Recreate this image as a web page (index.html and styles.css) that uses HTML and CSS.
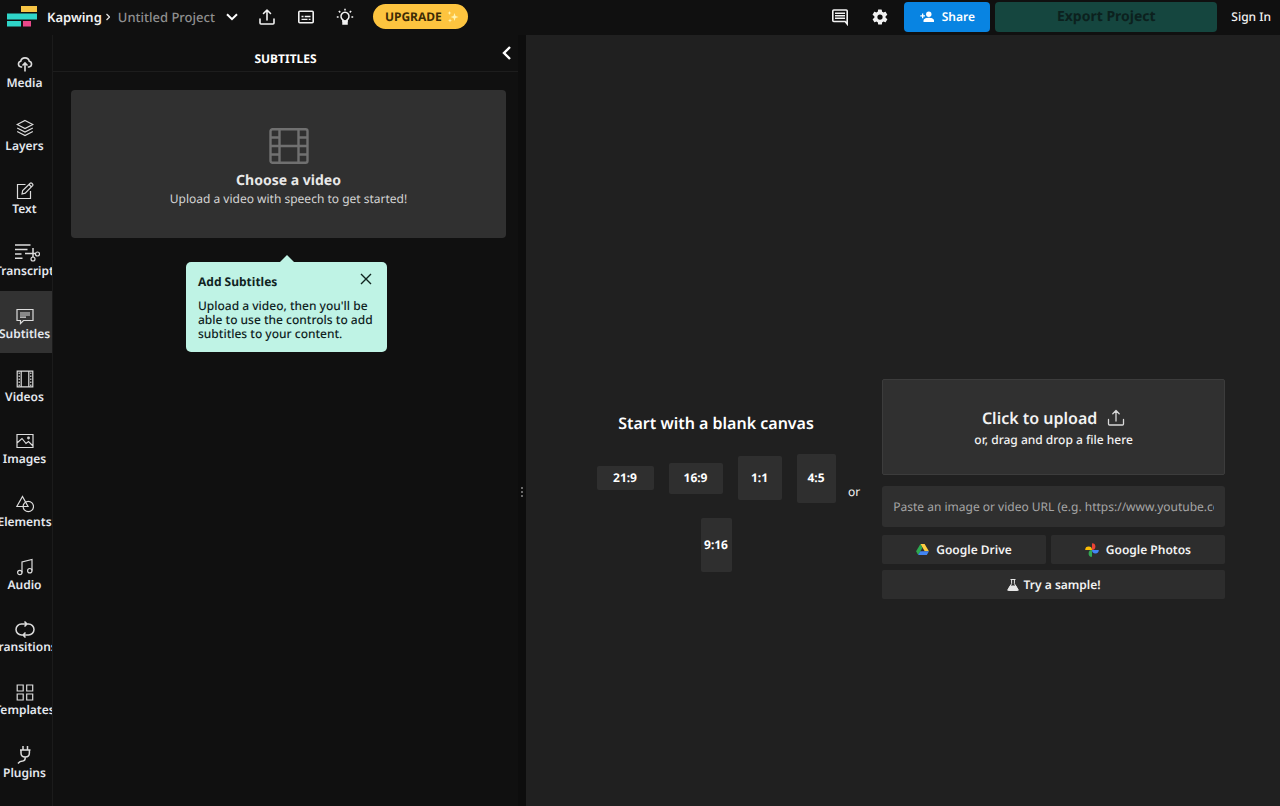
FILE: index.html
```html
<!DOCTYPE html>
<html lang="en">
<head>
<meta charset="utf-8">
<title>Kapwing</title>
<link rel="stylesheet" href="styles.css">
</head>
<body>
<div class="app">
  <header class="topbar">
    <a class="logo" href="#" aria-label="Home">
      <svg width="30" height="21" viewBox="0 0 30 21"><path fill="#f6c445" d="M14 0h16v6H14z"/><path fill="#2fd5c8" d="M0 7.500h30v6H0zM0 15h14v5.500H0z"/><path fill="#e8488a" d="M16 15h8v5.500h-8z"/></svg>
    </a>
    <a class="brand" href="#">Kapwing</a>
    <svg class="crumb" width="4" height="8" viewBox="0 0 4 8" fill="none" stroke="#ddd" stroke-width="1.300"><path d="M.5 1l3 3-3 3"/></svg>
    <button class="project">Untitled Project
      <svg width="12" height="8" viewBox="0 0 12 8" fill="none" stroke="#fff" stroke-width="2"><path d="M1 1.200l5 5 5-5"/></svg>
    </button>
    <div class="tools">
      <button class="icon" aria-label="Upload"><svg width="18" height="18" viewBox="0 0 18 18" fill="none" stroke="#f2f2f2" stroke-width="1.600" stroke-linecap="round" stroke-linejoin="round"><path d="M2 11v4q0 1 1 1h12q1 0 1-1v-4M9 12V2M5.500 5.500L9 2l3.500 3.500"/></svg></button>
      <button class="icon" aria-label="Subtitles"><svg width="18" height="18" viewBox="0 0 18 18" fill="none" stroke="#f2f2f2" stroke-width="1.600"><rect x="1.800" y="3.300" width="14.400" height="11.400" rx="1"/><path d="M4.500 8.500h2m1.200 0h5.800M4.500 11.300h6m1.200 0h1.800" stroke-width="1.300"/></svg></button>
      <button class="icon" aria-label="Tips"><svg width="18" height="18" viewBox="0 0 18 18" fill="none" stroke="#f2f2f2" stroke-width="1.500"><path d="M7 13v-1.200a4 4 0 1 1 4 0V13z"/><path d="M7 13h4v3H7z" fill="#f2f2f2"/><path d="M9 .8v1.800M.8 9h1.800M15.400 9h1.800M2.800 3l1.500 1.400M15.200 3l-1.500 1.400"/></svg></button>
    </div>
    <button class="upgrade">UPGRADE
      <svg width="12" height="12" viewBox="0 0 12 12" fill="#fff3b0"><path d="M7.500 2l1 3 3 1-3 1-1 3-1-3-3-1 3-1zM2.500 0l.6 1.400 1.400.6-1.400.6-.6 1.400-.6-1.400L.5 2l1.400-.6zM3 7.500l.6 1.400 1.400.6-1.400.6L3 11.500l-.6-1.400L1 9.500l1.400-.6z"/></svg>
    </button>
    <div class="actions">
      <button class="icon" aria-label="Comments"><svg width="18" height="18" viewBox="0 0 18 18" fill="none" stroke="#f2f2f2" stroke-width="1.600"><path d="M16.200 16V3q0-1-1-1H2.800q-1 0-1 1v9.500q0 1 1 1h11.400z"/><path d="M4 5.200h10M4 7.700h10M4 10.200h10" stroke-width="1.400"/></svg></button>
      <button class="icon" aria-label="Settings"><svg width="18" height="18" viewBox="0 0 24 24" fill="#f2f2f2"><path d="M19.400 13c0-.3.100-.6.100-1s0-.7-.1-1l2.100-1.600c.2-.2.300-.4.100-.6l-2-3.500c-.1-.2-.4-.3-.6-.2l-2.500 1a7.300 7.300 0 0 0-1.700-1l-.4-2.600a.5.500 0 0 0-.5-.5h-4c-.2 0-.5.200-.5.500L9 5.100a7.300 7.300 0 0 0-1.700 1l-2.500-1c-.2-.1-.5 0-.6.200l-2 3.500c-.1.200-.1.500.1.600L4.500 11a8 8 0 0 0 0 2l-2.100 1.600c-.2.200-.3.400-.1.600l2 3.500c.1.200.4.300.6.200l2.500-1c.5.400 1.100.7 1.700 1l.4 2.600c0 .3.200.5.500.5h4c.3 0 .5-.2.500-.5l.4-2.600a7.300 7.300 0 0 0 1.700-1l2.500 1c.2.100.5 0 .6-.2l2-3.500c.1-.2.100-.5-.1-.6zM12 15.500a3.500 3.500 0 1 1 0-7 3.500 3.500 0 0 1 0 7z"/></svg></button>
    </div>
    <button class="share">
      <svg width="14" height="12" viewBox="0 0 14 12" fill="#fff"><circle cx="8.800" cy="3.300" r="2.700"/><path d="M3.500 11V9.500C3.500 7.500 7 6.800 8.800 6.800S14 7.500 14 9.500V11zM2 2.500h1.300v1.700H5v1.300H3.300v1.700H2V5.500H.3V4.200H2z"/></svg>
      Share
    </button>
    <button class="export" disabled>Export Project</button>
    <a class="signin" href="#">Sign In</a>
  </header>

  <div class="body">
    <nav class="rail">
      <button class="tab"><svg class="tabicon" viewBox="0 0 18 18"><path stroke-width="1.600" d="M6.200 11H5a2.900 2.900 0 0 1-.3-5.700 4.400 4.400 0 0 1 8.600 0A2.900 2.900 0 0 1 13 11h-1.200M9 15.500V7M6.500 9.500L9 7l2.500 2.500"/></svg><span>Media</span></button>
      <button class="tab"><svg class="tabicon" viewBox="0 0 18 18"><path d="M9 1.500l7.800 4L9 9.500l-7.800-4zM1.200 9L9 13l7.800-4M1.200 12.500l7.800 4 7.800-4"/></svg><span>Layers</span></button>
      <button class="tab"><svg class="tabicon" viewBox="0 0 18 18"><path d="M9.500 2.500H1.500v14h13V9M6 12l.7-3.500 7.500-7.300q.8-.6 1.600.1l.8.8q.6.800 0 1.500L9.200 11.200zM13 2.500l2.500 2.500"/></svg><span>Text</span></button>
      <button class="tab"><svg class="tabicon script" viewBox="0 0 26 18"><path stroke-width="1.500" d="M1 1h15.500M1 5.500h12.500M1 10h6.500M1 14.200h7.500M19 4v9.500M11 9.500h10.500"/><circle cx="19" cy="15" r="2"/><circle cx="23.500" cy="10" r="2"/></svg><span>Transcript</span></button>
      <button class="tab active"><svg class="tabicon" viewBox="0 0 18 18"><path d="M1 2.500h16v11H7.500L4.500 16.500v-3H1zM4 6h10M4 8h10M4 10.200h6"/></svg><span>Subtitles</span></button>
      <button class="tab"><svg class="tabicon" viewBox="0 0 18 18"><path d="M1.200 1.200h15.600v15.600H1.200zM5.200 1.200v15.600M12.800 1.200v15.600"/><path d="M3.200 2.500v13.500M14.800 2.500v13.500" stroke-dasharray="1.500 1.500"/></svg><span>Videos</span></button>
      <button class="tab"><svg class="tabicon" viewBox="0 0 18 18"><path d="M1 2.500h16v13H1zM1 11l5-4.500 4 5 2.500-2L17 14"/><circle cx="12.500" cy="6" r=".8"/></svg><span>Images</span></button>
      <button class="tab"><svg class="tabicon" viewBox="0 0 18 18"><path d="M6.500 1.500l5.500 10H.8z"/><circle cx="12.300" cy="11.500" r="5.200"/></svg><span>Elements</span></button>
      <button class="tab"><svg class="tabicon" viewBox="0 0 18 18"><path d="M6 14.500V4l10-2.500V12.500"/><circle cx="3.800" cy="14.500" r="2.200"/><circle cx="13.800" cy="12.700" r="2.200"/></svg><span>Audio</span></button>
      <button class="tab"><svg class="tabicon wide" viewBox="0 0 26 18"><path stroke-width="1.500" d="M10.500 15H9.500a5.500 5.500 0 0 1 0-11H14.500M12.500 1.500L15 4l-2.500 2.500M15.500 4h1a5.500 5.500 0 0 1 0 11H11.500M13.500 12.500L11 15l2.500 2.500"/></svg><span>Transitions</span></button>
      <button class="tab"><svg class="tabicon" viewBox="0 0 18 18"><path d="M1.200 2h6v6h-6zM10.700 2h6v6h-6zM1.200 11h6v6h-6zM10.700 11h6v6h-6z"/></svg><span>Templates</span></button>
      <button class="tab"><svg class="tabicon" viewBox="0 0 18 18"><path stroke-width="1.500" d="M4 4h10.500M5 4v3q0 4 4.200 4t4.200-4V4M7 4V0M11.500 4V0M9.200 11q.3 3.700-2.500 4-3 0-4.700 2.500"/></svg><span>Plugins</span></button>
    </nav>

    <aside class="panel">
      <div class="panelhead">
        <h2>SUBTITLES</h2>
        <button class="collapse" aria-label="Collapse"><svg width="9" height="14" viewBox="0 0 9 14" fill="none" stroke="#fff" stroke-width="2.400"><path d="M8 1L2 7l6 6"/></svg></button>
      </div>
      <div class="panelbody">
        <button class="choose">
          <svg width="40" height="36" viewBox="0 0 40 36" fill="none" stroke="#707070" stroke-width="2.400"><rect x="1.500" y="1.200" width="37" height="33.600" rx="2"/><path d="M10.500 1v34M29.500 1v34M10.500 18h19M1 9.500h9.500M1 18h9.500M1 26.500h9.500M29.500 9.500H39M29.500 18H39M29.500 26.500H39"/></svg>
          <strong>Choose a video</strong>
          <span>Upload a video with speech to get started!</span>
        </button>
        <section class="tip">
          <div class="tiphead"><h3>Add Subtitles</h3>
            <button class="close" aria-label="Close"><svg width="12" height="12" viewBox="0 0 12 12" stroke="#10241f" stroke-width="1.400"><path d="M1 1l10 10M11 1L1 11"/></svg></button>
          </div>
          <p>Upload a video, then you'll be able to use the controls to add subtitles to your content.</p>
        </section>
      </div>
    </aside>
    <div class="grip"><svg width="2" height="10" viewBox="0 0 2 10" fill="#6a6a6a"><path d="M0 0h2v2H0zM0 4h2v2H0zM0 8h2v2H0z"/></svg></div>

    <main class="stage">
      <section class="blank">
        <h1>Start with a blank canvas</h1>
        <div class="ratios">
          <button class="ratio r219">21:9</button>
          <button class="ratio r169">16:9</button>
          <button class="ratio r11">1:1</button>
          <button class="ratio r45">4:5</button>
          <button class="ratio r916">9:16</button>
        </div>
      </section>
      <span class="or">or</span>
      <section class="sources">
        <button class="upload">
          <span class="uploadtitle">Click to upload
            <svg width="18" height="18" viewBox="0 0 18 18" fill="none" stroke="#d8d8d8" stroke-width="1.300" stroke-linecap="round" stroke-linejoin="round"><path d="M1.500 10.500V15q0 1 1 1h13q1 0 1-1v-4.500M9 12V1.500M5.800 4.700L9 1.500l3.200 3.200"/></svg>
          </span>
          <span>or, drag and drop a file here</span>
        </button>
        <input class="url" type="text" aria-label="Media URL" placeholder="Paste an image or video URL (e.g. https://www.youtube.com/watch)">
        <div class="services">
          <button class="service"><svg width="13" height="11" viewBox="0 0 14 12"><path fill="#ffcd40" d="M4.700 0h4.600L14 8H9.400z"/><path fill="#2da94f" d="M4.700 0L7 4 2.300 12 0 8z"/><path fill="#4285f4" d="M4.600 8H14l-2.300 4H2.300z"/></svg>Google Drive</button>
          <button class="service"><svg width="14" height="14" viewBox="0 0 14 14"><path fill="#ea4335" d="M7 .2a3.400 3.400 0 0 1 0 6.800z"/><path fill="#4285f4" d="M13.800 7A3.400 3.400 0 0 1 7 7z"/><path fill="#34a853" d="M7 13.800A3.400 3.400 0 0 1 7 7z"/><path fill="#fbbc05" d="M.2 7A3.400 3.400 0 0 1 7 7z"/></svg>Google Photos</button>
        </div>
        <button class="service sample"><svg width="12" height="12" viewBox="0 0 12 12"><path d="M3.500.5h5M4.600.5v4.200L1 10.500q-.4 1 .6 1h8.800q1 0 .6-1L7.400 4.700V.5" fill="none" stroke="#e6e6e6" stroke-width="1"/><path fill="#e6e6e6" d="M3 6.500h6l2.700 5H.3z"/></svg>Try a sample!</button>
      </section>
    </main>
  </div>
</div>
</body>
</html>
```
FILE: styles.css
```css
* { box-sizing: border-box; }
body {
  margin: 0;
  background: #101010;
  color: #f2f2f2;
  font-family: "Noto Sans", sans-serif;
  font-size: 12px;
  line-height: 18px;
  text-rendering: geometricPrecision;
}
button, input { font: inherit; color: inherit; border: 0; padding: 0; margin: 0; background: none; text-rendering: inherit; }
button { cursor: pointer; }
a { color: inherit; text-decoration: none; }
h1, h2, h3, p { margin: 0; }
svg { display: block; flex: none; }

.app { display: flex; flex-direction: column; height: 100vh; overflow: hidden; }

.topbar { display: flex; align-items: center; height: 35px; padding: 0 9px 2px 7px; flex: none; white-space: nowrap; }
.logo { margin-right: 10px; }
.brand { font-size: 13px; font-weight: 600; }
.crumb { margin: 0 8px 0 4px; }
.project { display: flex; align-items: center; gap: 11px; color: #8f8f8f; font-size: 13px; font-weight: 500; }
.tools { display: flex; gap: 21px; margin: 0 19px 0 20px; }
.upgrade {
  display: flex; align-items: center; gap: 5px; height: 25px; padding: 0 9px 0 12px;
  border-radius: 13px; background: #fdc43f; color: #3d2c05; font-weight: 700;
}
.actions { display: flex; gap: 22px; margin: 0 15px 0 auto; }
.share {
  display: flex; align-items: center; justify-content: center; gap: 8px; width: 86px; height: 30px;
  border-radius: 4px; background: #0884e2; color: #fff; font-weight: 600;
}
.export { width: 222px; height: 30px; margin: 0 14px 0 5px; border-radius: 4px; background: #15463f; color: #0c211e; font-size: 14px; font-weight: 700; }
.signin { font-weight: 500; }

.body { display: flex; flex: 1; min-height: 0; }

.rail { display: flex; flex-direction: column; width: 53px; padding: 5px 0 14px; border-right: 1px solid #1b1b1b; overflow: hidden; flex: none; }
.tab {
  display: flex; flex: 1; flex-direction: column; align-items: center; justify-content: center;
  padding: 6px 3px 0 0; white-space: nowrap; font-weight: 600; color: #e4e8ee; overflow: hidden;
}
.tab.active { background: #323232; }
.tabicon { width: 18px; height: 18px; fill: none; stroke: #dcdcdc; stroke-width: 1.2; }
.tabicon.wide { width: 26px; }
.tabicon.script { width: 26px; margin-left: 5px; }

.panel { width: 465px; flex: none; }
.panelhead { position: relative; display: flex; align-items: center; justify-content: center; height: 37px; padding-top: 11px; border-bottom: 1px solid #1d1d1d; }
.panelhead h2 { font-size: 12px; font-weight: 700; color: #fff; line-height: 18px; }
.collapse { position: absolute; right: 7px; top: 11px; }
.panelbody { padding: 18px 12px 0 18px; }
.choose {
  display: flex; flex-direction: column; align-items: center; justify-content: center; width: 100%; height: 148px;
  padding-top: 7px; border-radius: 4px; background: #303030; color: #d4d4d4;
}
.choose strong { margin-top: 8px; font-size: 14px; font-weight: 700; color: #e8e8e8; }
.tip { position: relative; width: 201px; margin: 24px 119px 0 115px; padding: 11px 12px; border-radius: 5px; background: #bff3e5; color: #10241f; }
.tip::before { content: ""; position: absolute; left: 94px; top: -7px; border: 7px solid transparent; border-top: 0; border-bottom-color: #bff3e5; }
.tiphead { display: flex; justify-content: space-between; margin-bottom: 8px; }
.tiphead h3 { font-size: 12px; font-weight: 700; }
.close { display: flex; padding: 0 3px 0 0; }
.tip p { line-height: 14px; font-weight: 500; }
.grip { display: flex; justify-content: center; width: 8px; padding-top: 452px; background: #0d0d0d; flex: none; }

.stage { display: flex; flex: 1; align-items: center; min-width: 0; padding: 137px 55px 0 62px; background: #202020; }
.blank { width: 256px; padding-top: 4px; flex: none; }
.blank h1 { margin-bottom: 19px; text-align: center; font-size: 16px; font-weight: 600; line-height: 24px; color: #fff; }
.ratios { display: flex; flex-wrap: wrap; justify-content: center; align-items: center; gap: 15px; }
.ratio { border-radius: 2px; background: #2f2f2f; font-weight: 700; color: #fff; }
.r219 { width: 57px; height: 24px; }
.r169 { width: 54px; height: 31px; }
.r11 { width: 44px; height: 44px; }
.r45 { width: 39px; height: 49px; }
.r916 { width: 31px; height: 54px; }
.or { margin: 6px 22px 0 4px; }
.sources { flex: 1; min-width: 0; display: flex; flex-direction: column; }
.upload {
  display: flex; flex-direction: column; align-items: center; justify-content: center; height: 96px;
  border: 1px solid #3c3c3c; border-radius: 2px; background: #303030; font-weight: 500;
}
.uploadtitle { display: flex; align-items: center; gap: 10px; font-size: 16px; font-weight: 600; line-height: 26px; }
.url { width: 100%; height: 41px; margin: 11px 0 8px; padding: 0 11px; border-radius: 3px; background: #2f2f2f; }
.url::placeholder { color: #a6a6a6; opacity: 1; }
.services { display: flex; gap: 5px; margin-bottom: 6px; }
.service { display: flex; flex: 1 1 auto; align-items: center; justify-content: center; gap: 7px; height: 29px; border-radius: 2px; background: #2d2d2d; font-weight: 600; }
.sample { flex: none; gap: 5px; }
```
